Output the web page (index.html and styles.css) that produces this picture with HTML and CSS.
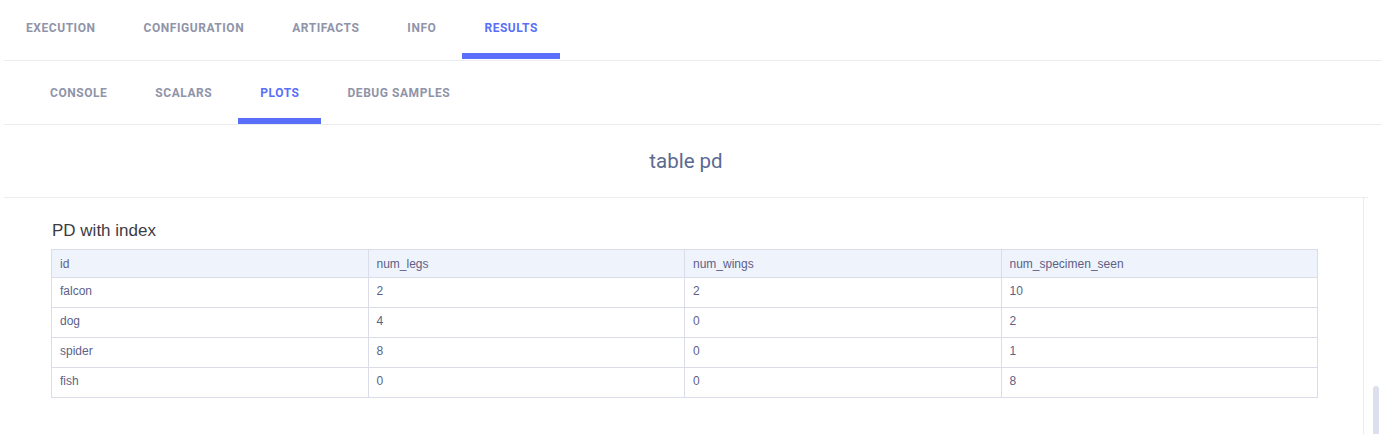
FILE: index.html
```html
<!DOCTYPE html>
<html>
<head>
<meta charset="utf-8">
<link rel="stylesheet" href="styles.css">
</head>
<body>
<div class="app">
  <nav class="tabs main-tabs">
    <a class="tab">Execution</a>
    <a class="tab">Configuration</a>
    <a class="tab">Artifacts</a>
    <a class="tab">Info</a>
    <a class="tab active">Results</a>
  </nav>
  <nav class="tabs sub-tabs">
    <a class="tab">Console</a>
    <a class="tab">Scalars</a>
    <a class="tab active">Plots</a>
    <a class="tab">Debug Samples</a>
  </nav>
  <div class="plot-header"><h2 class="plot-title">table pd</h2></div>
  <div class="plot-body">
    <h3 class="table-title">PD with index</h3>
    <table class="data-table">
      <thead>
        <tr><th>id</th><th>num_legs</th><th>num_wings</th><th>num_specimen_seen</th></tr>
      </thead>
      <tbody>
        <tr><td>falcon</td><td>2</td><td>2</td><td>10</td></tr>
        <tr><td>dog</td><td>4</td><td>0</td><td>2</td></tr>
        <tr><td>spider</td><td>8</td><td>0</td><td>1</td></tr>
        <tr><td>fish</td><td>0</td><td>0</td><td>8</td></tr>
      </tbody>
    </table>
  </div>
  <div class="scroll-thumb"></div>
</div>
</body>
</html>
```

FILE: styles.css
```css
html, body {
  margin: 0;
  padding: 0;
  background: #ffffff;
  overflow: hidden;
}

body {
  font-family: Roboto, "Liberation Sans", sans-serif;
}

.app {
  position: relative;
  height: 434px;
  padding-left: 4px;
  box-sizing: border-box;
  overflow: hidden;
}

.tabs {
  display: flex;
  border-bottom: 1px solid #ebecf0;
}

.main-tabs {
  height: 60px;
}

.sub-tabs {
  height: 63px;
  padding-left: 24px;
}

.tab {
  position: relative;
  padding: 20px 22px 0;
  margin-right: 4px;
  font-weight: 700;
  font-size: 12px;
  line-height: 16px;
  letter-spacing: 0.55px;
  text-transform: uppercase;
  color: #8f94a9;
  cursor: pointer;
}

.sub-tabs .tab {
  padding-top: 24px;
}

.tab.active {
  color: #5a6ff8;
}

.tab.active::after {
  content: "";
  position: absolute;
  left: 0;
  right: 0;
  bottom: 1px;
  height: 6px;
  background: #5a6ff9;
}

.sub-tabs .tab.active::after {
  bottom: 0;
}

.plot-header {
  height: 72px;
  margin-right: 14px;
  display: flex;
  align-items: center;
  justify-content: center;
  border-bottom: 1px solid #ebecf0;
}

.plot-title {
  margin: 0;
  font-weight: 400;
  font-size: 20.5px;
  line-height: 24px;
  color: #5b6a8f;
}

.plot-body {
  box-sizing: border-box;
  margin-right: 18px;
  height: 236px;
  border-right: 1px solid #ebecf0;
  padding: 23px 45px 0 47px;
}

.table-title {
  margin: 0 0 8px 1px;
  font-family: "Liberation Sans", Arial, sans-serif;
  font-weight: 400;
  font-size: 17px;
  line-height: 20px;
  color: #3c3c44;
}

.data-table {
  width: 1267px;
  border-collapse: collapse;
  table-layout: fixed;
  font-family: "Liberation Sans", Arial, sans-serif;
  font-size: 12px;
  color: #5c5f87;
}

.data-table th,
.data-table td {
  border: 1px solid #dadce9;
  padding: 0 8px;
  text-align: left;
  font-weight: 400;
}

.data-table th {
  height: 27px;
  background: #eff3fb;
}

.data-table td {
  height: 25px;
  padding-bottom: 4px;
}

.scroll-thumb {
  position: absolute;
  left: 1373px;
  top: 386px;
  width: 6px;
  height: 60px;
  border-radius: 3px;
  background: #dcdfee;
}
```
